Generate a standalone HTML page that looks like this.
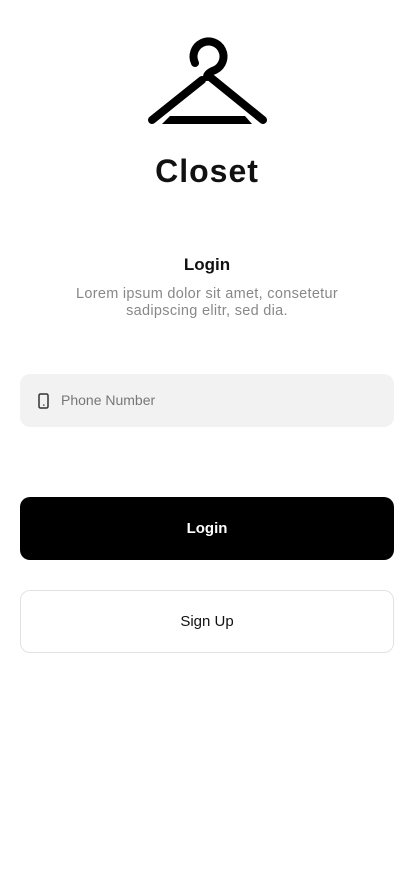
<!DOCTYPE html>
<html><head><meta charset="utf-8"><style>
body{margin:0;width:414px;height:896px;background:#fff;font-family:"Liberation Sans",sans-serif;position:relative;overflow:hidden}
*{box-sizing:border-box}
.t{position:absolute;left:0;width:414px;text-align:center}
.inp{position:absolute;left:20px;top:374px;width:374px;height:53px;background:#f2f2f2;border-radius:10px}
.btn{position:absolute;left:20px;width:374px;border-radius:10px;text-align:center;font-size:15px;font-weight:bold}
</style></head><body>
<svg style="position:absolute;left:0;top:0" width="414" height="200">
<path d="M195,63 A15,15 0 1 1 215,70 Q207,73 207,77" fill="none" stroke="#000" stroke-width="8" stroke-linecap="round"/>
<line x1="202" y1="80" x2="152" y2="120" stroke="#000" stroke-width="8" stroke-linecap="round"/>
<line x1="210" y1="77" x2="263" y2="120" stroke="#000" stroke-width="8" stroke-linecap="round"/>
<polygon points="170,116 245,116 252,124 162,124" fill="#000"/>
</svg>
<div class="t" style="top:153px;font-size:32px;font-weight:bold;color:#111;letter-spacing:1px">Closet</div>
<div class="t" style="top:255px;font-size:17px;font-weight:bold;color:#111">Login</div>
<div class="t" style="top:286px;font-size:14.5px;color:#888;line-height:17px;letter-spacing:0.3px">Lorem ipsum dolor sit amet, consetetur<br>sadipscing elitr, sed dia.</div>
<div class="inp">
<svg style="position:absolute;left:18px;top:19px" width="12" height="16"><rect x="1" y="1" width="9" height="14" rx="1.5" fill="none" stroke="#333" stroke-width="1.5"/><rect x="5" y="11.5" width="1.5" height="1.2" fill="#333"/></svg>
<div style="position:absolute;left:41px;top:18px;font-size:14px;color:#777">Phone Number</div>
</div>
<div class="btn" style="top:497px;height:63px;line-height:63px;background:#000;color:#fff">Login</div>
<div class="btn" style="top:590px;height:63px;line-height:61px;border:1px solid #e2e2e2;color:#111;font-weight:normal;font-size:15px">Sign Up</div>
</body></html>
